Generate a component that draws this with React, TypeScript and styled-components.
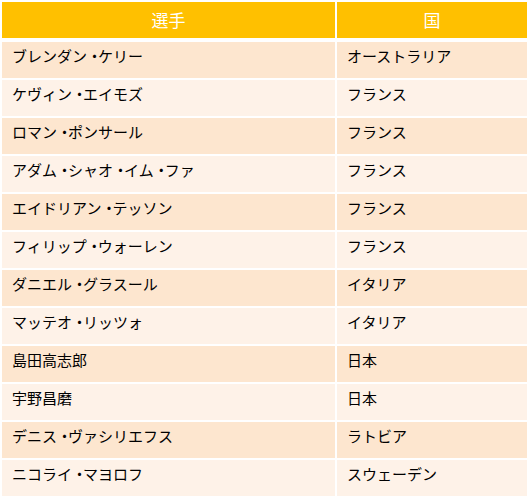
import { Fragment } from "react";
import styled, { createGlobalStyle } from "styled-components";

const GlobalStyle = createGlobalStyle`
  html, body {
    margin: 0;
    padding: 0;
    background: #ffffff;
  }
  body {
    font-family: "Noto Sans CJK JP", "Noto Sans", sans-serif;
  }
`;

const players: { name: string; country: string }[] = [
  { name: "ブレンダン・ケリー", country: "オーストラリア" },
  { name: "ケヴィン・エイモズ", country: "フランス" },
  { name: "ロマン・ポンサール", country: "フランス" },
  { name: "アダム・シャオ・イム・ファ", country: "フランス" },
  { name: "エイドリアン・テッソン", country: "フランス" },
  { name: "フィリップ・ウォーレン", country: "フランス" },
  { name: "ダニエル・グラスール", country: "イタリア" },
  { name: "マッテオ・リッツォ", country: "イタリア" },
  { name: "島田高志郎", country: "日本" },
  { name: "宇野昌磨", country: "日本" },
  { name: "デニス・ヴァシリエフス", country: "ラトビア" },
  { name: "ニコライ・マヨロフ", country: "スウェーデン" },
];

const Sheet = styled.div`
  display: grid;
  grid-template-columns: 333px 190px;
  gap: 2px;
  padding: 2px;
  width: 529px;
  box-sizing: border-box;
  background: #ffffff;
`;

const HeadCell = styled.div`
  height: 36px;
  margin-bottom: 2px;
  background: #ffc000;
  color: #ffffff;
  font-size: 17px;
  line-height: 36px;
  text-align: center;
`;

const Cell = styled.div<{ $even: boolean }>`
  height: 36px;
  box-sizing: border-box;
  padding: 3px 10px 0;
  background: ${(p) => (p.$even ? "#fef2e8" : "#fde6cf")};
  color: #000000;
  font-size: 15px;
  line-height: 22px;
  white-space: nowrap;
`;

// the middle dot sits tighter than a full-width glyph in the original font
const Dot = styled.span`
  letter-spacing: -4px;
`;

function Name({ text }: { text: string }) {
  const parts = text.split("・");
  return (
    <>
      {parts.map((part, i) => (
        <Fragment key={i}>
          {i > 0 && <Dot>・</Dot>}
          {part}
        </Fragment>
      ))}
    </>
  );
}

function App() {
  return (
    <>
      <GlobalStyle />
      <Sheet>
        <HeadCell>選手</HeadCell>
        <HeadCell>国</HeadCell>
        {players.map((p, i) => [
          <Cell key={`n${i}`} $even={i % 2 === 1}>
            <Name text={p.name} />
          </Cell>,
          <Cell key={`c${i}`} $even={i % 2 === 1}>
            {p.country}
          </Cell>,
        ])}
      </Sheet>
    </>
  );
}

export default App;
